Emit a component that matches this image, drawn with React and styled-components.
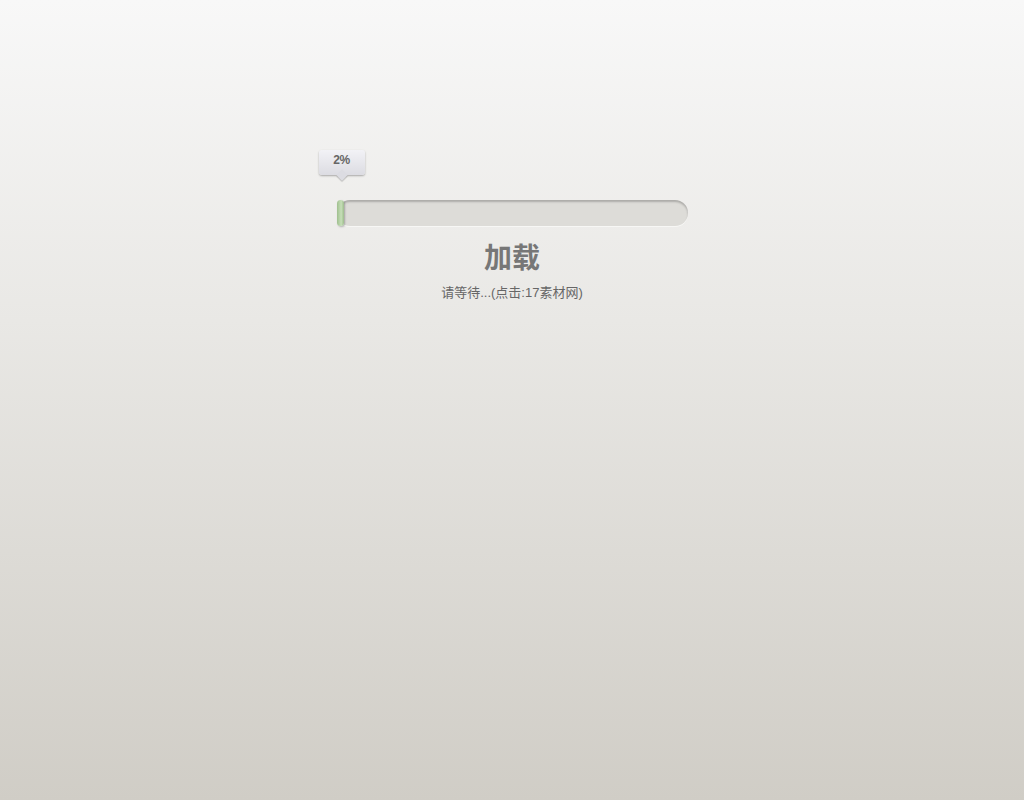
import React from "react";
import styled, { createGlobalStyle } from "styled-components";

const Global = createGlobalStyle`
  html, body {
    margin: 0;
    height: 100%;
  }
  body {
    background: linear-gradient(to bottom, #f8f8f8 0%, #e9e8e5 40%, #d0cdc6 100%);
    font-family: Arial, "Liberation Sans", "Noto Sans CJK SC", sans-serif;
    min-height: 800px;
  }
`;

const Page = styled.div`
  height: 800px;
  padding-top: 200px;
  box-sizing: border-box;
`;

const Loader = styled.div`
  width: 351px;
  margin: 0 auto;
`;

const Track = styled.div`
  position: relative;
  height: 26px;
  border-radius: 13px;
  background: #dddcd8;
  box-shadow: inset 0 2px 2px rgba(0, 0, 0, 0.22), 0 1px 0 #f7f7f5;
`;

const Fill = styled.div`
  height: 100%;
  border-radius: 4px;
  background: linear-gradient(to right, #9fbf8e, #c6dfb8 60%, #9dbd8c);
  box-shadow: 1px 1px 2px rgba(0, 0, 0, 0.25);
`;

const Bubble = styled.div`
  position: absolute;
  top: -50px;
  width: 46px;
  height: 25px;
  margin-left: -25px;
  border-radius: 3px;
  background: linear-gradient(to bottom, #f2f2f6, #dcdce2);
  box-shadow: 0 1px 2px rgba(0, 0, 0, 0.3);
  color: #666;
  font-size: 12px;
  font-weight: bold;
  text-align: center;
  line-height: 20px;
  letter-spacing: -0.5px;

  &::after {
    content: "";
    position: absolute;
    left: 50%;
    bottom: -4px;
    width: 8px;
    height: 8px;
    margin-left: -4px;
    background: #dcdce2;
    transform: rotate(45deg);
    box-shadow: 1px 1px 1px rgba(0, 0, 0, 0.2);
  }
`;

const Title = styled.h1`
  margin: 13px 0 0;
  text-align: center;
  font-size: 28px;
  line-height: 34px;
  font-weight: bold;
  color: #777;
  font-family: "Noto Sans CJK SC", sans-serif;
`;

const Note = styled.p`
  margin: 9px 0 0;
  text-align: center;
  font-size: 13px;
  color: #666;
  font-family: Arial, "Liberation Sans", "Noto Sans CJK SC", sans-serif;
`;

export default function App() {
  const percent = 2;
  return (
    <Page>
      <Global />
      <Loader>
        <Track>
          <Fill style={{ width: `${percent}%` }} />
          <Bubble style={{ left: `${percent}%` }}>{percent}%</Bubble>
        </Track>
        <Title>加载</Title>
        <Note>请等待...(点击:17素材网)</Note>
      </Loader>
    </Page>
  );
}
